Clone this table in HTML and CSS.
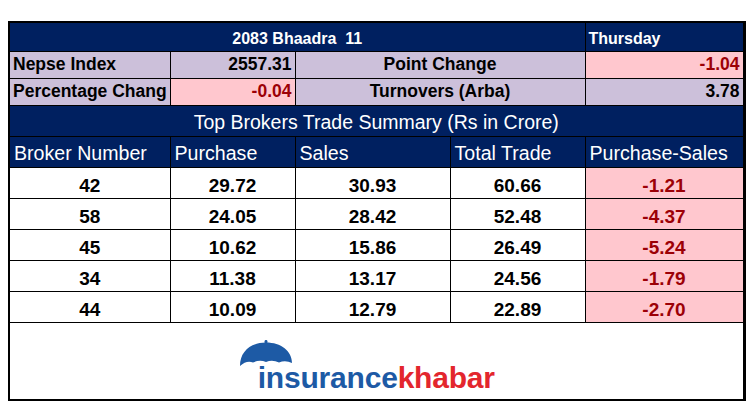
FILE: index.html
```html
<!DOCTYPE html>
<html lang="en">
<head>
<meta charset="utf-8">
<title>Top Brokers Trade Summary</title>
<link rel="stylesheet" href="styles.css">
</head>
<body>
<table class="sheet">
  <colgroup>
    <col class="c1"><col class="c2"><col class="c3"><col class="c4"><col class="c5">
  </colgroup>
  <tr class="r-date">
    <td colspan="4" class="navy center">2083 Bhaadra&nbsp; 11</td>
    <td class="navy left">Thursday</td>
  </tr>
  <tr class="r-info">
    <td class="lav left">Nepse Index</td>
    <td class="lav right">2557.31</td>
    <td colspan="2" class="lav center">Point Change</td>
    <td class="pink right">-1.04</td>
  </tr>
  <tr class="r-info">
    <td class="lav left">Percentage Chang</td>
    <td class="pink right">-0.04</td>
    <td colspan="2" class="lav center">Turnovers (Arba)</td>
    <td class="lav right">3.78</td>
  </tr>
  <tr class="r-title">
    <td colspan="5" class="navy center">Top Brokers Trade Summary (Rs in Crore)</td>
  </tr>
  <tr class="r-head">
    <td class="navy left">Broker Number</td>
    <td class="navy left">Purchase</td>
    <td class="navy left">Sales</td>
    <td class="navy left">Total Trade</td>
    <td class="navy left">Purchase-Sales</td>
  </tr>
  <tr class="r-data"><td>42</td><td>29.72</td><td>30.93</td><td>60.66</td><td class="pink">-1.21</td></tr>
  <tr class="r-data"><td>58</td><td>24.05</td><td>28.42</td><td>52.48</td><td class="pink">-4.37</td></tr>
  <tr class="r-data"><td>45</td><td>10.62</td><td>15.86</td><td>26.49</td><td class="pink">-5.24</td></tr>
  <tr class="r-data"><td>34</td><td>11.38</td><td>13.17</td><td>24.56</td><td class="pink">-1.79</td></tr>
  <tr class="r-data"><td>44</td><td>10.09</td><td>12.79</td><td>22.89</td><td class="pink">-2.70</td></tr>
  <tr class="r-logo">
    <td colspan="5">
      <div class="logo">
        <svg class="umbrella" viewBox="0 0 52 27" width="52" height="27" aria-hidden="true">
          <rect x="24.6" y="0" width="2.8" height="4" rx="1.2" fill="#1d5aa5"/>
          <path fill="#1d5aa5" d="M0,26 C0,11 11,2.5 26,2.5 C41,2.5 52,11 52,23 Q45.5,20 39,22.5 Q32.5,19.5 26,22 Q19.5,19.5 13,22.5 Q6.5,20 0,26 Z"/>
        </svg>
        <span class="ins">insurance</span><span class="kh">khabar</span>
      </div>
    </td>
  </tr>
</table>
</body>
</html>
```

FILE: styles.css
```css
html, body {
  margin: 0;
  padding: 0;
  background: #ffffff;
}

body {
  font-family: "Liberation Sans", Arial, sans-serif;
  color: #000000;
}

.sheet {
  margin: 21px 0 0 8px;
  width: 735px;
  table-layout: fixed;
  border-collapse: collapse;
  border: 2px solid #000000;
  border-right-width: 3px;
}

.c1 { width: 161px; }
.c2 { width: 125px; }
.c3 { width: 155px; }
.c4 { width: 135px; }
.c5 { width: 159px; }

.sheet td {
  border: 1px solid #000000;
  padding: 0 3px 3px 3px;
  line-height: 1;
  white-space: nowrap;
  overflow: hidden;
  vertical-align: bottom;
}

.navy { background: #002060; color: #ffffff; }
.lav { background: #ccc0da; }
.pink { background: #ffc7ce; color: #9c0006; }

.left { text-align: left; }
.right { text-align: right; }
.center { text-align: center; }

.r-date { height: 29px; }
.r-date td {
  font-size: 16px;
  font-weight: bold;
  padding-bottom: 4px;
}

.r-info { height: 27px; }
.r-info td {
  font-size: 17.5px;
  font-weight: bold;
  padding-bottom: 4px;
}

.r-title { height: 31px; }
.r-title td {
  font-size: 19.5px;
  padding-bottom: 3px;
}

.r-head { height: 31px; }
.r-head td {
  font-size: 19.6px;
  padding-left: 4px;
  padding-bottom: 3px;
}

.r-data { height: 31px; }
.r-data td {
  font-size: 19px;
  font-weight: bold;
  text-align: center;
  padding-bottom: 3px;
}

.r-logo { height: 78px; }
.r-logo td {
  vertical-align: top;
  padding: 40px 0 0 0;
  text-align: center;
}

.logo {
  position: relative;
  display: inline-block;
  font-size: 30px;
  line-height: 30px;
  font-weight: bold;
  letter-spacing: -0.2px;
}

.umbrella {
  position: absolute;
  left: -18px;
  top: -23px;
}

.ins { color: #1d5aa5; }
.kh { color: #e3262d; }
```
